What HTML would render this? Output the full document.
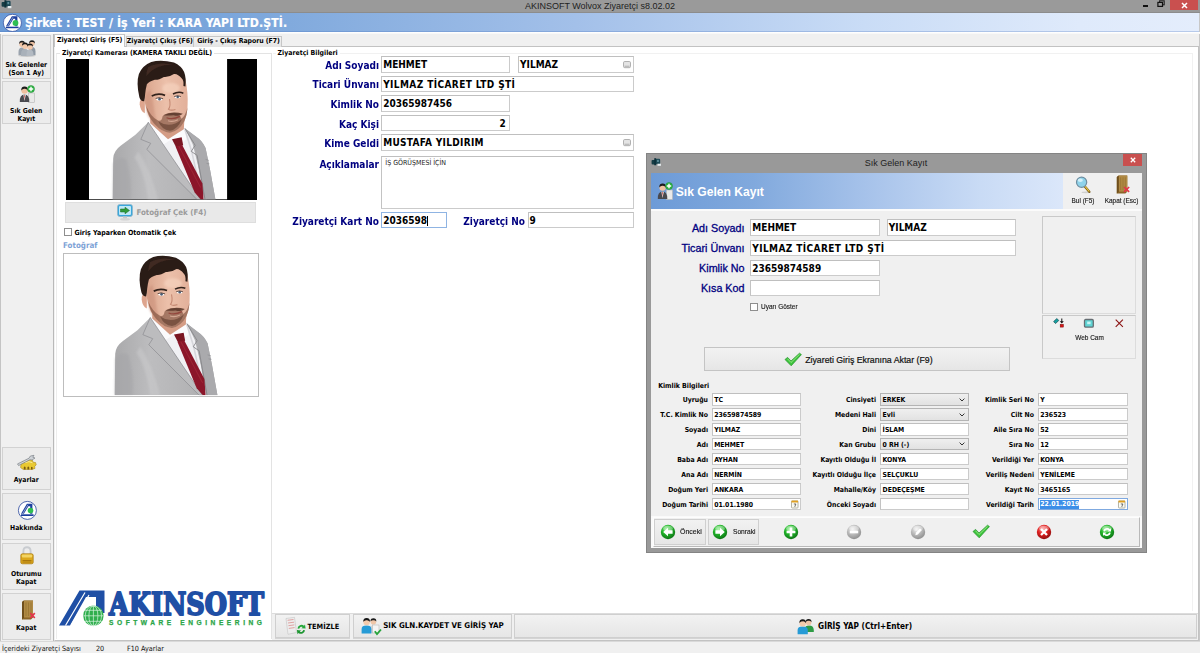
<!DOCTYPE html>
<html lang="tr">
<head>
<meta charset="utf-8">
<title>AKINSOFT Wolvox Ziyaretçi s8.02.02</title>
<style>
*{box-sizing:border-box;margin:0;padding:0}
html,body{width:1200px;height:653px;overflow:hidden;background:#f0f0f0}
body{position:relative;font-family:"DejaVu Sans Condensed","Liberation Sans",sans-serif;font-weight:bold;font-size:6.9px;color:#000;line-height:1}
.a{position:absolute;white-space:nowrap}
.ar{font-family:"Liberation Sans",sans-serif;font-weight:normal}
.tb{font-family:"DejaVu Sans Condensed","Liberation Sans",sans-serif;font-weight:bold}
.tn{font-family:"DejaVu Sans Condensed","Liberation Sans",sans-serif;font-weight:normal}
.inp{position:absolute;background:#fff;border:1px solid #cbcbcb;border-top-color:#bfbfbf;border-left-color:#c3c3c3;white-space:nowrap;overflow:hidden}
.big{font-size:10px;padding-left:.9px}
.L{position:absolute;white-space:nowrap;color:#000080;font-size:11px;text-align:right;transform:scaleX(.91);transform-origin:right center}
.sb{position:absolute;left:2px;width:48.5px;background:#ececec;border:1px solid #d2d2d2;text-align:center;font-size:6.8px;line-height:8px}
.btn{position:absolute;background:linear-gradient(#f2f2f2,#e6e6e6);border:1px solid #cfcfcf}
.sm{font-size:6.85px;padding-left:1.3px}
.sl{position:absolute;white-space:nowrap;font-size:6.85px;text-align:right}
.ms{font-family:"Liberation Sans",sans-serif;font-weight:normal;font-size:7.5px;line-height:8px;color:#1c1c1c;-webkit-text-stroke:.15px #1c1c1c;transform:scaleX(.86)}
svg{position:absolute;overflow:visible}
</style>
</head>
<body>
<svg width="0" height="0" style="left:0;top:0">
<defs>
<filter id="bl" x="-5%" y="-5%" width="110%" height="110%"><feGaussianBlur stdDeviation="0.5"/></filter>
<filter id="bl2" x="-20%" y="-20%" width="140%" height="140%"><feGaussianBlur stdDeviation="1.2"/></filter>
<linearGradient id="suit" x1="0" y1="0" x2="1" y2="0"><stop offset="0" stop-color="#a9a9ab"/><stop offset=".35" stop-color="#bdbdbf"/><stop offset=".75" stop-color="#b3b3b5"/><stop offset="1" stop-color="#a2a2a4"/></linearGradient>
<linearGradient id="skin" x1="0" y1="0" x2="1" y2="0"><stop offset="0" stop-color="#d9a48c"/><stop offset=".5" stop-color="#ecc0aa"/><stop offset="1" stop-color="#e2b09a"/></linearGradient>
<symbol id="man" viewBox="0 0 140 140">
<rect width="140" height="140" fill="#fff"/>
<g filter="url(#bl)">
<!-- suit body -->
<path d="M60 63 L47 75.5 L32 86.5 Q25 91.5 24.5 99 L24 140 L128 140 L122.5 110 L118 88.5 Q114.5 81 108.5 77.5 L97 69 Z" fill="url(#suit)"/>
<!-- sleeve shading -->
<path d="M24.3 104 Q30 96 38 100 Q44 120 42 140 L24 140Z" fill="#a5a5a8" opacity=".55" filter="url(#bl2)"/>
<path d="M50 92 Q62 110 70 140 L60 140 Q56 112 46 98Z" fill="#c9c9cb" opacity=".6" filter="url(#bl2)"/>
<!-- shirt -->
<path d="M61 62 L60 66 L84 98 L111 140 L119 140 L105 85 L97 69 Z" fill="#f1f1f4"/>
<path d="M61 60 L97.5 67.5 L98.5 80 L91 86 L84.5 79.5 L71 88 L60 66Z" fill="#fbfbfd"/>
<path d="M97 70 L104 92 L112 128" stroke="#d7d7dc" stroke-width="1.6" fill="none"/>
<!-- lapels -->
<path d="M60 63 L52.5 80 L62.5 84 L58.5 90 L109.5 140 L113 140 L84 98 Z" fill="#bcbcbe" stroke="#8c8c90" stroke-width=".7"/>
<path d="M97 69 L106.5 84 L116.5 140 L128 140 L122.5 110 L118 88.5 Q113 80 108.5 77.5Z" fill="#aaaaad"/>
<path d="M97 69 L107.5 86 L103.5 92 L109.5 96 L117.5 140" fill="none" stroke="#86868a" stroke-width=".9"/>
<path d="M119 104 l3 .5 M118 100 l3.5 1" stroke="#8a8a8e" stroke-width=".6"/>
<!-- tie -->
<path d="M84 79.8 L93.8 78 L95.3 86 L88.2 87.8 Z" fill="#7a1323"/>
<path d="M87.6 87.2 L94.3 85.6 L114.8 124 L116 140 L113.2 140 L107 133 Z" fill="#8b1729"/>
<path d="M91 87 L113 128" stroke="#a32a3b" stroke-width="1" opacity=".7"/>
<!-- neck -->
<path d="M62 50 L62 64 L80 80 L96 70 L97 52 Z" fill="#d49c85"/>
<!-- ear -->
<path d="M56.5 40.5 Q51 38.5 51.3 45 Q52 52 56.5 54 Z" fill="#dea58e"/>
<!-- face -->
<path d="M56.5 27 Q55 40 57.2 46 Q59 57 66 64.5 Q74 73 82 73.2 Q91 72 96.5 62 Q99.6 55 99.8 46 Q100.5 34 97.5 20 Q84 4 62 15 Z" fill="url(#skin)"/>
<path d="M57 36 Q56.5 48 60 57 Q64 64 70 68 Q66 56 65 44 Q64 36 62 30Z" fill="#c98e78" opacity=".55" filter="url(#bl2)"/>
<ellipse cx="83" cy="29" rx="9" ry="5" fill="#f6d3bf" opacity=".7" filter="url(#bl2)"/>
<!-- beard -->
<path d="M58 47 Q59.5 57 66 64.5 Q74 73.2 82 73.4 Q91 72 96.5 62 Q99.4 56 99.8 48 Q97.5 57 93.5 59.5 Q92 54 85.5 53.5 Q77.5 53 74.5 57 Q73.5 63 69.5 61 Q62.5 57.5 58 47Z" fill="#7a4e3c" opacity=".62"/>
<path d="M70 62 Q82 70 94 60 Q90 70 82 71.5 Q74 71 70 62Z" fill="#5e3b2d" opacity=".6"/>
<path d="M75.5 56 Q84 51.5 95 54.5 Q92 57.5 85.5 56 Q80 56.5 75.5 56Z" fill="#5d3a2c" opacity=".9"/>
<path d="M78.5 58.5 Q85 60.8 92 57.2" stroke="#93463c" stroke-width="1.3" fill="none"/>
<path d="M80 61.5 Q85 63 90 60.5" stroke="#e0b29d" stroke-width="1.1" fill="none" opacity=".8"/>
<!-- eyes / brows / nose -->
<path d="M63.5 36.8 Q70 33.6 77 36.2" stroke="#33231d" stroke-width="1.7" fill="none"/>
<path d="M85 34.8 Q90.5 32 95.5 34" stroke="#33231d" stroke-width="1.6" fill="none"/>
<ellipse cx="71.2" cy="40" rx="3.2" ry="1.4" fill="#fff"/><circle cx="71.4" cy="40" r="1.3" fill="#4b5f78"/>
<ellipse cx="89.6" cy="37.9" rx="3" ry="1.3" fill="#fff"/><circle cx="89.8" cy="37.9" r="1.25" fill="#4b5f78"/>
<path d="M67.5 39.3 Q71 37.6 75 39.6 M86.3 37.4 Q89.6 35.8 93 37.4" stroke="#3b2a24" stroke-width=".8" fill="none"/>
<path d="M81.5 40 Q83 47 80.5 50 Q83 51.8 87.5 50.2" stroke="#c58a74" stroke-width="1.1" fill="none"/>
<!-- hair -->
<path d="M55.8 42 Q52.4 42.5 51 38 Q47.6 24 50.5 15 Q54 6.5 63 3 Q73 .2 86 3.6 Q93.5 7 96.3 13 Q98.6 19 97.6 27.5 L95.6 27 Q96.2 21.5 94 19.5 Q89.5 14.2 86 15 Q81 18.4 75.8 17.9 Q70 21.2 66.6 20.7 Q60.5 22.5 58.6 25.2 Q57.3 30 56.9 34.3 Q56.6 39 55.8 42 Z" fill="#2b1c17"/>
<path d="M60 8 Q72 2 86 6 Q78 5 70 8 Q63 11 58 17 Q58 12 60 8Z" fill="#4a3026" opacity=".7"/>
</g>
</symbol>
</defs>
</svg>
<svg width="0" height="0" style="left:0;top:0"><defs>
<radialGradient id="gball" cx=".4" cy=".3" r=".75"><stop offset="0" stop-color="#8df08a"/><stop offset=".45" stop-color="#22b52a"/><stop offset="1" stop-color="#0b6f14"/></radialGradient>
<radialGradient id="rball" cx=".4" cy=".3" r=".75"><stop offset="0" stop-color="#ff9a9a"/><stop offset=".45" stop-color="#e02222"/><stop offset="1" stop-color="#8a0c0c"/></radialGradient>
<radialGradient id="xball" cx=".4" cy=".3" r=".75"><stop offset="0" stop-color="#f1f1f1"/><stop offset=".5" stop-color="#b9b9b9"/><stop offset="1" stop-color="#8a8a8a"/></radialGradient>
</defs></svg>
<!-- ===== main window title bar ===== -->
<div class="a" style="left:0;top:0;width:1200px;height:12.6px;background:#9a9a9a;border-bottom:1px solid #8c8c8c"></div>
<svg style="left:1px;top:0" width="11" height="9" viewBox="0 0 11 9" filter="url(#bl)"><rect x=".6" y="2" width="4.2" height="4.8" rx="1" fill="#183c45"/><rect x="4.6" y=".8" width="5" height="5.8" rx="1.2" fill="#1f4a56"/><rect x="3.4" y=".2" width="2" height="7.4" fill="#10323b"/><rect x="6.4" y="2" width="1.8" height="2.2" fill="#5f8f9c"/><rect x="6.8" y="6" width="3.6" height="2.2" fill="#e6ecee"/></svg>
<div class="a ar" style="left:450px;top:0.5px;width:300px;text-align:center;font-size:9px;color:#1e1e1e;line-height:10px">AKINSOFT Wolvox Ziyaretçi s8.02.02</div>
<div class="a" style="left:1142.5px;top:5px;width:5.5px;height:1.6px;background:#111"></div>
<svg style="left:1157px;top:0" width="9" height="8" viewBox="0 0 9 8"><rect x="2.6" y=".8" width="4.6" height="4" fill="none" stroke="#222" stroke-width="1.1"/><rect x=".9" y="2.4" width="4.6" height="4" fill="#9a9a9a" stroke="#111" stroke-width="1.2"/></svg>
<div class="a" style="left:1169.8px;top:0;width:28.2px;height:9.8px;background:#c9504f"></div>
<svg style="left:1181px;top:1.5px" width="7" height="7" viewBox="0 0 7 7"><path d="M1 1L6 6M6 1L1 6" stroke="#fff" stroke-width="1.5"/></svg>

<!-- ===== blue header ===== -->
<div class="a" style="left:0;top:31.6px;width:1200px;height:2.6px;background:linear-gradient(#fff,#fdfdfd 60%,#f0f0f0);z-index:1"></div>
<div class="a" style="left:0;top:12.6px;width:1200px;height:19px;box-shadow:inset 0 -1px 0 rgba(70,110,185,.28);background:linear-gradient(to right,#6a9ad6 0%,#7ea8dc 22%,#a3c0e9 48%,#c9dcf6 72%,#dfeafb 90%,#e4edfc 100%)"></div>
<div class="a" style="left:0;top:32.2px;width:1.4px;height:609px;background:#c4c4c4"></div>
<div class="a" style="left:1199px;top:12.6px;width:1px;height:641px;background:#c8c8c8"></div>
<svg style="left:3.2px;top:13.8px" width="18.8" height="17.8" viewBox="0 0 18.8 17.8"><ellipse cx="9.4" cy="8.9" rx="9.1" ry="8.6" fill="#fff" stroke="#27459a" stroke-width=".7"/><path d="M3 12.3L8.9 2.3H14.4V12.3H12.2V4.7H10.4L5.9 12.3Z" fill="#1c3f9e"/><path d="M4.6 12.3L10 3.2" stroke="#fff" stroke-width=".5"/><circle cx="12.5" cy="8.9" r="2.9" fill="#2fbf52"/><rect x="3" y="12.7" width="12.6" height="1.5" fill="#1c3f9e"/></svg>
<div class="a tb" style="left:25px;top:16px;font-size:12.15px;color:#fff;line-height:14px;letter-spacing:.1px;-webkit-text-stroke:.2px #fff">Şirket : TEST / İş Yeri : KARA YAPI LTD.ŞTİ.</div>

<!-- ===== sidebar ===== -->
<div class="a" style="left:1.4px;top:32.2px;width:52.4px;height:608.5px;background:#f0f0f0;border-right:1.8px solid #b9b9b9"></div>
<div class="sb" style="top:34.5px;height:44.5px"><div class="a" style="left:0;right:0;top:25.5px">Sık Gelenler<br>(Son 1 Ay)</div></div>
<div class="sb" style="top:80.5px;height:43px"><div class="a" style="left:0;right:0;top:25px">Sık Gelen<br>Kayıt</div></div>
<div class="sb" style="top:447px;height:42.5px"><div class="a" style="left:0;right:0;top:28px">Ayarlar</div></div>
<div class="sb" style="top:493px;height:46.5px"><div class="a" style="left:0;right:0;top:30px">Hakkında</div></div>
<div class="sb" style="top:543px;height:46.5px"><div class="a" style="left:0;right:0;top:26px">Oturumu<br>Kapat</div></div>
<div class="sb" style="top:593px;height:46.5px"><div class="a" style="left:0;right:0;top:30px">Kapat</div></div>

<!-- ===== tabs + page ===== -->
<div class="a" style="left:54px;top:46.2px;width:1145px;height:594.5px;background:#fff;border:1px solid #c2c2c2;border-left-color:#f2f2f2"></div>
<div class="a" style="left:125.5px;top:35.5px;width:68.5px;height:11px;background:linear-gradient(#f3f3f3,#e4e4e4);border:1px solid #c6c6c6;border-bottom:none"></div>
<div class="a" style="left:194px;top:35.5px;width:88px;height:11px;background:linear-gradient(#f3f3f3,#e4e4e4);border:1px solid #c6c6c6;border-bottom:none;border-left:none"></div>
<div class="a" style="left:53.8px;top:33.6px;width:71.7px;height:13.8px;background:#fff;border:1px solid #c6c6c6;border-bottom:none"></div>
<div class="a" style="left:56.9px;top:37.3px">Ziyaretçi Giriş (F5)</div>
<div class="a" style="left:126.8px;top:38.3px">Ziyaretçi Çıkış (F6)</div>
<div class="a" style="left:197.2px;top:38.3px;letter-spacing:-.02px">Giriş - Çıkış Raporu (F7)</div>

<!-- group boxes -->
<div class="a" style="left:56.3px;top:52.8px;width:215.5px;height:586px;border:1px solid #e3e3e3;border-left-color:#ededed;border-bottom:none"></div>
<div class="a" style="left:273px;top:52.8px;width:919.5px;height:558px;border:1px solid #f1f1f1;border-left:none;border-bottom:none"></div>
<div class="a" style="left:60px;top:50.2px;background:#fff;padding:0 2px">Ziyaretçi Kamerası (KAMERA TAKILI DEĞİL)</div>
<div class="a" style="left:275.6px;top:50.2px;background:#fff;padding:0 2px">Ziyaretçi Bilgileri</div>

<!-- camera -->
<div class="a" style="left:66.4px;top:59.1px;width:190.8px;height:140.6px;background:#000"></div>
<svg style="left:88.7px;top:59.1px" width="138.3" height="140.6" viewBox="0 0 140 140" preserveAspectRatio="none"><use href="#man"/></svg>
<div class="a" style="left:65px;top:201.5px;width:190.8px;height:21px;background:#e9e9e9;border:1px solid #dedede"></div>
<div class="a" style="left:136.4px;top:208.6px;font-size:7.9px;color:#9b9b9b">Fotoğraf Çek (F4)</div>
<svg style="left:117px;top:204px" width="16" height="17" viewBox="0 0 16 17"><rect x=".5" y=".5" width="15" height="12" rx="2.2" fill="#3aa7dc" stroke="#8fb6c9" stroke-width=".8"/><rect x="2" y="2" width="12" height="9" rx="1" fill="#bfe8f7"/><path d="M3.5 5H8V3.2L12.5 6.5L8 9.8V8H3.5Z" fill="#2f9a3a" stroke="#176b22" stroke-width=".5"/><rect x="6" y="12.5" width="4" height="2" fill="#c9c9c9"/><ellipse cx="8" cy="15.3" rx="5" ry="1.2" fill="#d4d4d4"/></svg>
<div class="a" style="left:64.4px;top:228px;width:7.8px;height:7.8px;background:#fff;border:1px solid #8e8e8e"></div>
<div class="a" style="left:74.5px;top:229.5px;font-size:7px">Giriş Yaparken Otomatik Çek</div>
<div class="a" style="left:63px;top:242.4px;color:#7ea3d6;font-size:7.95px">Fotoğraf</div>
<div class="a" style="left:63.3px;top:253.2px;width:196px;height:144.3px;background:#fff;border:1px solid #bdbdbd"></div>
<svg style="left:91px;top:254.4px" width="138.3" height="141.2" viewBox="0 0 140 140" preserveAspectRatio="none"><use href="#man"/></svg>

<!-- AKINSOFT logo -->
<svg style="left:58px;top:588px" width="212" height="42" viewBox="0 0 212 42">
<path d="M1 37.5 L21.5 2.5 H46.5 V25 H38 V9 H28 L12 37.5 Z" fill="#1f4fa5"/>
<path d="M7.5 37.5 L27 4.5 M13 37.5 L31 7" stroke="#fff" stroke-width="1.2" fill="none"/>
<circle cx="35.4" cy="27.8" r="10.2" fill="#2fae4d"/>
<g stroke="#d9f3df" stroke-width=".7" fill="none"><ellipse cx="35.4" cy="27.8" rx="4.5" ry="10"/><ellipse cx="35.4" cy="27.8" rx="8.2" ry="10"/><path d="M35.4 17.8V37.8M25.4 27.8H45.4M27 22.3H43.8M27 33.3H43.8"/></g>
<text x="51" y="27.3" font-family="DejaVu Serif Condensed,DejaVu Serif,Liberation Serif,serif" font-weight="bold" font-size="31" fill="#1f4fa5" stroke="#1f4fa5" stroke-width="1.9" stroke-linejoin="round" textLength="155" lengthAdjust="spacingAndGlyphs">AKINSOFT</text>
<text x="51" y="37.2" font-family="Liberation Sans,sans-serif" font-weight="bold" font-size="6.6" fill="#2aa548" stroke="#2aa548" stroke-width=".25" textLength="153" lengthAdjust="spacing">SOFTWARE ENGINEERING</text>
</svg>

<!-- form labels -->
<div class="L" style="left:273px;width:106px;top:59.8px">Adı Soyadı</div>
<div class="L" style="left:273px;width:106px;top:79.4px">Ticari Ünvanı</div>
<div class="L" style="left:273px;width:106px;top:99.0px">Kimlik No</div>
<div class="L" style="left:273px;width:106px;top:118.6px">Kaç Kişi</div>
<div class="L" style="left:273px;width:106px;top:138.2px">Kime Geldi</div>
<div class="L" style="left:273px;width:106px;top:158.8px">Açıklamalar</div>
<div class="L" style="left:273px;width:106px;top:215.8px">Ziyaretçi Kart No</div>
<div class="L" style="left:419px;width:106px;top:215.8px">Ziyaretçi No</div>
<!-- form inputs -->
<div class="inp big" style="left:381.3px;top:56px;width:129px;height:16.6px;line-height:16px">MEHMET</div>
<div class="inp big" style="left:518.2px;top:56px;width:115.4px;height:16.6px;line-height:16px">YILMAZ</div>
<div class="inp big" style="left:381.3px;top:75.6px;width:252.3px;height:16.6px;line-height:16px;letter-spacing:.4px">YILMAZ TİCARET LTD ŞTİ</div>
<div class="inp big" style="left:381.3px;top:95.2px;width:129px;height:16.6px;line-height:16px">20365987456</div>
<div class="inp big" style="left:381.3px;top:114.8px;width:129px;height:16.6px;line-height:16px;text-align:right;padding-right:3.5px">2</div>
<div class="inp big" style="left:381.3px;top:134.4px;width:252.3px;height:16.6px;line-height:16px;letter-spacing:.3px">MUSTAFA YILDIRIM</div>
<div class="inp" style="left:381.3px;top:156.4px;width:252.3px;height:52.2px"><div class="a tn" style="left:3px;top:3px;font-size:7px;color:#222">İŞ GÖRÜŞMESİ İÇİN</div></div>
<div class="inp big" style="left:381.3px;top:212px;width:65.5px;height:16.4px;line-height:15.8px;border-color:#8fb4e3">2036598<span style="display:inline-block;width:1px;height:10px;background:#000;vertical-align:-1.5px"></span></div>
<div class="inp big" style="left:527.7px;top:212px;width:105.9px;height:16.4px;line-height:15.8px">9</div>
<svg style="left:623px;top:60.5px" width="8" height="8" viewBox="0 0 8 8"><rect x=".5" y=".5" width="7" height="6.2" rx="1.3" fill="#e4e4e4" stroke="#a9a9a9" stroke-width=".9"/><rect x="1.5" y="4.6" width="5" height="1.5" fill="#bdbdbd"/></svg>
<svg style="left:623px;top:138.9px" width="8" height="8" viewBox="0 0 8 8"><rect x=".5" y=".5" width="7" height="6.2" rx="1.3" fill="#e4e4e4" stroke="#a9a9a9" stroke-width=".9"/><rect x="1.5" y="4.6" width="5" height="1.5" fill="#bdbdbd"/></svg>

<!-- bottom buttons -->
<div class="a" style="left:272px;top:613px;width:926px;height:27px;background:#f0f0f0;border-top:1px solid #dcdcdc"></div>
<div class="btn" style="left:274.6px;top:614px;width:75.6px;height:23.6px;box-shadow:0 1px 0 #d4d4d4"></div>
<div class="btn" style="left:352.8px;top:614px;width:159px;height:23.6px;box-shadow:0 1px 0 #d4d4d4"></div>
<div class="btn" style="left:514px;top:614px;width:682.5px;height:23.6px;box-shadow:0 1px 0 #d4d4d4"></div>
<div class="a" style="left:307.6px;top:622.5px;font-size:7.35px">TEMİZLE</div>
<div class="a" style="left:383.2px;top:622.2px;font-size:7.92px">SIK GLN.KAYDET VE GİRİŞ YAP</div>
<div class="a" style="left:818.1px;top:622.3px;font-size:8.23px">GİRİŞ YAP (Ctrl+Enter)</div>

<!-- status bar -->
<div class="a" style="left:0;top:640.7px;width:1200px;height:12.3px;background:#f0f0f0;border-top:1px solid #d9d9d9"></div>
<div class="a tn" style="left:2px;top:644.5px;font-size:7.2px;color:#111">İçerideki Ziyaretçi Sayısı</div>
<div class="a tn" style="left:96px;top:644.5px;font-size:7.2px;color:#111">20</div>
<div class="a tn" style="left:127px;top:644.5px;font-size:7.2px;color:#111">F10 Ayarlar</div>
<!-- ===== dialog ===== -->
<div class="a" style="left:645.7px;top:153px;width:501.2px;height:399.8px;background:#999;border:1px solid #848484"></div>
<div class="a" style="left:650.8px;top:172.8px;width:491.4px;height:375.3px;background:#f0f0f0"></div>
<svg style="left:651.3px;top:157.5px" width="10.5" height="8.6" viewBox="0 0 11 9" filter="url(#bl)"><rect x=".6" y="2" width="4.2" height="4.8" rx="1" fill="#183c45"/><rect x="4.6" y=".8" width="5" height="5.8" rx="1.2" fill="#1f4a56"/><rect x="3.4" y=".2" width="2" height="7.4" fill="#10323b"/><rect x="6.4" y="2" width="1.8" height="2.2" fill="#5f8f9c"/><rect x="6.8" y="6" width="3.6" height="2.2" fill="#e6ecee"/></svg>
<div class="a ar" style="left:796px;top:158px;width:200px;text-align:center;font-size:9px;color:#222;line-height:10px">Sık Gelen Kayıt</div>
<div class="a" style="left:1123.1px;top:153.6px;width:19.4px;height:12.4px;background:#c9504f"></div>
<svg style="left:1129.8px;top:156.8px" width="6" height="6" viewBox="0 0 6 6"><path d="M.8 .8L5.2 5.2M5.2 .8L.8 5.2" stroke="#fff" stroke-width="1.3"/></svg>
<div class="a" style="left:650.8px;top:172.8px;width:412.4px;height:36px;background:linear-gradient(to right,#6d9bd7 0%,#81a9dd 25%,#a6c2ea 52%,#c9dbf5 80%,#dbe7fa 100%)"></div>
<div class="a" style="left:650.8px;top:208.8px;width:491.4px;height:1.9px;background:#fbfbfb"></div>
<div class="a ar" style="left:675.8px;top:185px;font-size:12.1px;font-weight:bold;color:#fff;line-height:14px">Sık Gelen Kayıt</div>
<div class="a ms" style="left:1062.5px;top:196.5px;width:40px;text-align:center">Bul (F5)</div>
<div class="a ms" style="left:1095.8px;top:196.5px;width:51px;text-align:center">Kapat (Esc)</div>
<div class="a ar" style="left:640px;width:104.5px;text-align:right;top:222.7px;font-size:10.75px;color:#000080;line-height:11px;-webkit-text-stroke:.3px #000080">Adı Soyadı</div>
<div class="a ar" style="left:640px;width:104.5px;text-align:right;top:242.8px;font-size:10.75px;color:#000080;line-height:11px;-webkit-text-stroke:.3px #000080">Ticari Ünvanı</div>
<div class="a ar" style="left:640px;width:104.5px;text-align:right;top:262.9px;font-size:10.75px;color:#000080;line-height:11px;-webkit-text-stroke:.3px #000080">Kimlik No</div>
<div class="a ar" style="left:640px;width:104.5px;text-align:right;top:283.0px;font-size:10.75px;color:#000080;line-height:11px;-webkit-text-stroke:.3px #000080">Kısa Kod</div>
<div class="inp big" style="left:750.4px;top:219.4px;width:129.5px;height:16.6px;line-height:16px;">MEHMET</div>
<div class="inp big" style="left:886.9px;top:219.4px;width:129.1px;height:16.6px;line-height:16px;">YILMAZ</div>
<div class="inp big" style="left:750.4px;top:239.5px;width:265.6px;height:16.6px;line-height:16px;letter-spacing:.4px">YILMAZ TİCARET LTD ŞTİ</div>
<div class="inp big" style="left:750.4px;top:259.6px;width:129.5px;height:16.6px;line-height:16px;">23659874589</div>
<div class="inp big" style="left:750.4px;top:279.7px;width:129.5px;height:16.6px;line-height:16px;"></div>
<div class="a" style="left:750.4px;top:302.8px;width:7.8px;height:7.8px;background:#fff;border:1px solid #8e8e8e"></div>
<div class="a ms" style="left:760.9px;top:302.8px;transform-origin:left center">Uyarı Göster</div>
<div class="a" style="left:1041.6px;top:216.4px;width:94.2px;height:97.3px;background:#f0f0f0;border:1px solid #c9c9c9;border-right-color:#dcdcdc;border-bottom-color:#dcdcdc"></div>
<div class="a" style="left:1041.6px;top:315px;width:94.2px;height:44.4px;background:#f0f0f0;border:1px solid #c9c9c9;border-right-color:#dcdcdc;border-bottom-color:#dcdcdc"></div>
<div class="a ms" style="left:1058.7px;top:333.8px;width:61px;text-align:center">Web Cam</div>
<div class="btn" style="left:704.2px;top:347.2px;width:306.2px;height:23.9px;border-color:#c4c4c4"></div>
<div class="a ar" style="left:805.2px;top:355.3px;font-size:8.75px;color:#111;line-height:10px;-webkit-text-stroke:.2px #111">Ziyareti Giriş Ekranına Aktar (F9)</div>
<div class="a" style="left:658.2px;top:383.3px">Kimlik Bilgileri</div>
<div class="sl" style="left:608px;width:100px;top:396.9px">Uyruğu</div>
<div class="inp sm" style="left:711.9px;top:393.4px;width:89.1px;height:12.3px;line-height:13.100000000000001px">TC</div>
<div class="sl" style="left:608px;width:100px;top:411.8px">T.C. Kimlik No</div>
<div class="inp sm" style="left:711.9px;top:408.3px;width:89.1px;height:12.3px;line-height:13.100000000000001px">23659874589</div>
<div class="sl" style="left:608px;width:100px;top:426.8px">Soyadı</div>
<div class="inp sm" style="left:711.9px;top:423.3px;width:89.1px;height:12.3px;line-height:13.100000000000001px">YILMAZ</div>
<div class="sl" style="left:608px;width:100px;top:441.8px">Adı</div>
<div class="inp sm" style="left:711.9px;top:438.2px;width:89.1px;height:12.3px;line-height:13.100000000000001px">MEHMET</div>
<div class="sl" style="left:608px;width:100px;top:456.7px">Baba Adı</div>
<div class="inp sm" style="left:711.9px;top:453.2px;width:89.1px;height:12.3px;line-height:13.100000000000001px">AYHAN</div>
<div class="sl" style="left:608px;width:100px;top:471.6px">Ana Adı</div>
<div class="inp sm" style="left:711.9px;top:468.1px;width:89.1px;height:12.3px;line-height:13.100000000000001px">NERMİN</div>
<div class="sl" style="left:608px;width:100px;top:486.6px">Doğum Yeri</div>
<div class="inp sm" style="left:711.9px;top:483.1px;width:89.1px;height:12.3px;line-height:13.100000000000001px">ANKARA</div>
<div class="sl" style="left:608px;width:100px;top:501.5px">Doğum Tarihi</div>
<div class="inp sm" style="left:711.9px;top:498.0px;width:89.1px;height:12.3px;line-height:13.100000000000001px">01.01.1980<svg style="right:1.5px;top:1.2px" width="7.5" height="8.5" viewBox="0 0 8 9"><rect x=".5" y="1" width="7" height="7.5" rx=".8" fill="#fbfbf3" stroke="#9a9a8a" stroke-width=".8"/><rect x=".5" y=".6" width="7" height="2" fill="#e0a020"/><path d="M3 4.2H5.2L4 7.3" stroke="#444" stroke-width=".8" fill="none"/></svg></div>
<div class="sl" style="left:776px;width:100px;top:396.9px">Cinsiyeti</div>
<div class="inp sm" style="left:880.3px;top:393.4px;width:88.5px;height:12.3px;line-height:13.100000000000001px;background:linear-gradient(#efefef,#e2e2e2);border-color:#b4b4b4">ERKEK<svg style="right:2.5px;top:3.3px" width="6" height="4" viewBox="0 0 6 4"><path d="M.6 .6L3 3L5.4 .6" stroke="#333" stroke-width="1" fill="none"/></svg></div>
<div class="sl" style="left:776px;width:100px;top:411.8px">Medeni Hali</div>
<div class="inp sm" style="left:880.3px;top:408.3px;width:88.5px;height:12.3px;line-height:13.100000000000001px;background:linear-gradient(#efefef,#e2e2e2);border-color:#b4b4b4">Evli<svg style="right:2.5px;top:3.3px" width="6" height="4" viewBox="0 0 6 4"><path d="M.6 .6L3 3L5.4 .6" stroke="#333" stroke-width="1" fill="none"/></svg></div>
<div class="sl" style="left:776px;width:100px;top:426.8px">Dini</div>
<div class="inp sm" style="left:880.3px;top:423.3px;width:88.5px;height:12.3px;line-height:13.100000000000001px">İSLAM</div>
<div class="sl" style="left:776px;width:100px;top:441.8px">Kan Grubu</div>
<div class="inp sm" style="left:880.3px;top:438.2px;width:88.5px;height:12.3px;line-height:13.100000000000001px;background:linear-gradient(#efefef,#e2e2e2);border-color:#b4b4b4">0 RH (-)<svg style="right:2.5px;top:3.3px" width="6" height="4" viewBox="0 0 6 4"><path d="M.6 .6L3 3L5.4 .6" stroke="#333" stroke-width="1" fill="none"/></svg></div>
<div class="sl" style="left:776px;width:100px;top:456.7px">Kayıtlı Olduğu İl</div>
<div class="inp sm" style="left:880.3px;top:453.2px;width:88.5px;height:12.3px;line-height:13.100000000000001px">KONYA</div>
<div class="sl" style="left:776px;width:100px;top:471.6px">Kayıtlı Olduğu İlçe</div>
<div class="inp sm" style="left:880.3px;top:468.1px;width:88.5px;height:12.3px;line-height:13.100000000000001px">SELÇUKLU</div>
<div class="sl" style="left:776px;width:100px;top:486.6px">Mahalle/Köy</div>
<div class="inp sm" style="left:880.3px;top:483.1px;width:88.5px;height:12.3px;line-height:13.100000000000001px">DEDEÇEŞME</div>
<div class="sl" style="left:776px;width:100px;top:501.5px">Önceki Soyadı</div>
<div class="inp sm" style="left:880.3px;top:498.0px;width:88.5px;height:12.3px;line-height:13.100000000000001px"></div>
<div class="sl" style="left:934px;width:100px;top:396.9px">Kimlik Seri No</div>
<div class="inp sm" style="left:1038px;top:393.4px;width:89.5px;height:12.3px;line-height:13.100000000000001px">Y</div>
<div class="sl" style="left:934px;width:100px;top:411.8px">Cilt No</div>
<div class="inp sm" style="left:1038px;top:408.3px;width:89.5px;height:12.3px;line-height:13.100000000000001px">236523</div>
<div class="sl" style="left:934px;width:100px;top:426.8px">Aile Sıra No</div>
<div class="inp sm" style="left:1038px;top:423.3px;width:89.5px;height:12.3px;line-height:13.100000000000001px">52</div>
<div class="sl" style="left:934px;width:100px;top:441.8px">Sıra No</div>
<div class="inp sm" style="left:1038px;top:438.2px;width:89.5px;height:12.3px;line-height:13.100000000000001px">12</div>
<div class="sl" style="left:934px;width:100px;top:456.7px">Verildiği Yer</div>
<div class="inp sm" style="left:1038px;top:453.2px;width:89.5px;height:12.3px;line-height:13.100000000000001px">KONYA</div>
<div class="sl" style="left:934px;width:100px;top:471.6px">Veriliş Nedeni</div>
<div class="inp sm" style="left:1038px;top:468.1px;width:89.5px;height:12.3px;line-height:13.100000000000001px">YENİLEME</div>
<div class="sl" style="left:934px;width:100px;top:486.6px">Kayıt No</div>
<div class="inp sm" style="left:1038px;top:483.1px;width:89.5px;height:12.3px;line-height:13.100000000000001px">3465165</div>
<div class="sl" style="left:934px;width:100px;top:501.5px">Verildiği Tarih</div>
<div class="inp sm" style="left:1038px;top:498.0px;width:89.5px;height:12.3px;line-height:13.100000000000001px;border-color:#7fa9e0"><span style="background:#3c8ee8;color:#fff;display:inline-block;height:8.9px;line-height:8.9px;vertical-align:top;margin-top:.8px">22.01.2019</span><svg style="right:1.5px;top:1.2px" width="7.5" height="8.5" viewBox="0 0 8 9"><rect x=".5" y="1" width="7" height="7.5" rx=".8" fill="#fbfbf3" stroke="#9a9a8a" stroke-width=".8"/><rect x=".5" y=".6" width="7" height="2" fill="#e0a020"/><path d="M3 4.2H5.2L4 7.3" stroke="#444" stroke-width=".8" fill="none"/></svg></div>
<div class="a" style="left:650.8px;top:516.4px;width:491.4px;height:31.7px;background:#fafafa"></div>
<div class="a" style="left:652.6px;top:516.6px;width:487.6px;height:30px;background:#f0f0f0;border:1px solid #fdfdfd;border-right-color:#b9b9b9;border-bottom-color:#b9b9b9"></div>
<div class="btn" style="left:653.8px;top:519px;width:51.8px;height:26px"></div>
<div class="btn" style="left:707.5px;top:519px;width:51.2px;height:26px"></div>
<div class="a ms" style="left:679.8px;top:528.2px;transform-origin:left center;transform:scaleX(.93)">Önceki</div>
<div class="a ms" style="left:732.7px;top:528.2px;transform-origin:left center;transform:scaleX(.885)">Sonraki</div>
<!-- ===== icons ===== -->
<!-- sidebar: group -->
<svg style="left:17px;top:39px" width="20" height="18" viewBox="0 0 20 18" filter="url(#bl)">
<ellipse cx="10" cy="16.6" rx="9" ry="1.3" fill="#c9c9c9"/>
<path d="M1.5 13Q1.5 8.5 5 8.5Q8.5 8.5 8.5 13V16H1.5Z" fill="#9aa3ad"/><circle cx="5" cy="5.2" r="2.7" fill="#efc3a4"/><path d="M2.2 5Q2 1.8 5 1.8Q8 1.8 7.8 5Q6.5 3.4 5 3.6Q3.4 3.4 2.2 5Z" fill="#1b1b1b"/>
<path d="M11.5 12.5Q11.5 8 15 8Q18.5 8 18.5 12.5V16H11.5Z" fill="#8f99a5"/><circle cx="15" cy="4.6" r="2.7" fill="#efc3a4"/><path d="M12.2 4.4Q12 1.2 15 1.2Q18 1.2 17.8 4.4Q16.5 2.8 15 3Q13.4 2.8 12.2 4.4Z" fill="#1b1b1b"/>
<path d="M4 15Q4 10 8 10Q12 10 12 15V17H4Z" fill="#a9b1ba"/><circle cx="8" cy="7" r="2.9" fill="#f3c9ab"/><path d="M5 6.8Q4.8 3.4 8 3.4Q11.2 3.4 11 6.8Q9.6 5 8 5.3Q6.3 5 5 6.8Z" fill="#161616"/>
<path d="M9.5 15.5Q9.5 10.8 13 10.8Q16.5 10.8 16.5 15.5V17H9.5Z" fill="#b3bac2"/><circle cx="13" cy="8" r="2.8" fill="#f3c9ab"/><path d="M10.1 7.8Q9.9 4.6 13 4.6Q16.1 4.6 15.9 7.8Q14.6 6.1 13 6.4Q11.4 6.1 10.1 7.8Z" fill="#161616"/>
</svg>
<!-- sidebar: person + plus -->
<svg style="left:18.5px;top:84.5px" width="17" height="19" viewBox="0 0 17 19" filter="url(#bl)">
<rect x="9.5" y="8" width="6" height="9.5" fill="#e9e9e9" stroke="#b5b5b5" stroke-width=".6"/>
<path d="M.8 17Q.5 9.5 5.5 9.5Q10.5 9.5 10.3 17Z" fill="#4a4a4f"/><path d="M4.4 9.8L5.5 16L6.8 9.8Z" fill="#fff"/><path d="M5.1 10.2L5.5 15L6 10.2Z" fill="#b02222"/>
<circle cx="5.6" cy="5.6" r="3.2" fill="#efc0a0"/><path d="M2.3 5.4Q2 1.6 5.6 1.6Q9.2 1.6 8.9 5.4Q7.4 3.4 5.6 3.7Q3.8 3.4 2.3 5.4Z" fill="#1a1a1a"/>
<circle cx="12" cy="4" r="3.5" fill="#2fb545" stroke="#1d8a30" stroke-width=".5"/><path d="M12 1.8V6.2M9.8 4H14.2" stroke="#fff" stroke-width="1.4"/>
</svg>
<!-- sidebar: settings -->
<svg style="left:17px;top:455px" width="20" height="15" viewBox="0 0 20 15" filter="url(#bl)">
<path d="M4 9.2L5.6 6.6L7.6 7.2L9 5.2L11.4 5.8L13 4.2L15.4 5.2L16 7.2L18.6 7.6L19.2 10L17.6 11.4L18 13.4L15 14.4H6.2L3.6 12.6Z" fill="#e9c933" stroke="#a98a1c" stroke-width=".6"/>
<path d="M6.8 14.4V12.2Q7.7 11 8.6 12.2V14.4ZM10.4 14.4V12.2Q11.3 11 12.2 12.2V14.4ZM14 14.4V12.2Q14.8 11.2 15.6 12.2V14.4Z" fill="#7c5d0c"/>
<path d="M8 7.6L12 6.6L15.5 7.8" stroke="#f8eb9a" stroke-width="1" fill="none"/>
<path d="M.5 8.9L12 3.2L13.4 1L17 .3L15.8 2.2L18 3L15 5L12.8 4.8L1.6 10.6Z" fill="#cfd3d8" stroke="#6c7279" stroke-width=".6"/>
</svg>
<!-- sidebar: about -->
<svg style="left:17.6px;top:500.6px" width="18.8" height="18.8" viewBox="0 0 18.8 18.8"><ellipse cx="9.4" cy="9.4" rx="9" ry="9" fill="#fff" stroke="#27459a" stroke-width=".8"/><path d="M3 12.8L8.9 2.8H14.4V12.8H12.2V5.2H10.4L5.9 12.8Z" fill="#1c3f9e"/><path d="M4.6 12.8L10 3.7" stroke="#fff" stroke-width=".5"/><circle cx="12.5" cy="9.6" r="2.8" fill="#2fbf52"/><rect x="3" y="13.3" width="12.6" height="1.7" fill="#1c3f9e"/></svg>
<!-- sidebar: lock -->
<svg style="left:19.5px;top:545.5px" width="14" height="18.5" viewBox="0 0 14 18.5" filter="url(#bl)">
<path d="M3.4 8.5V5.2Q3.4 1.2 7 1.2Q10.6 1.2 10.6 5.2V8.5" fill="none" stroke="#c9ccd0" stroke-width="1.9"/>
<rect x=".8" y="7.8" width="12.4" height="10" rx="1.6" fill="#dba71e" stroke="#a87508" stroke-width=".7"/>
<rect x="1.8" y="8.6" width="10.4" height="3" rx="1" fill="#f3d463"/>
<path d="M2.5 14.5h9M2.5 16h9" stroke="#9c6b06" stroke-width=".8"/>
</svg>
<!-- sidebar: door -->
<svg style="left:20.5px;top:599.5px" width="15" height="20" viewBox="0 0 15 20" filter="url(#bl)">
<path d="M1 2L3 .6H12V17.5L10 19.4H1Z" fill="#8a6528"/><path d="M3 .6H12V17.5H3Z" fill="#b08a44"/><path d="M1 2L3 .6V17.5L1 19.4Z" fill="#6f4f1c"/>
<path d="M5 2.5V16M7.5 2.5V16M10 2.5V16" stroke="#94702f" stroke-width=".7"/>
<path d="M9.3 13.2L13.8 18M13.8 13.2L9.3 18" stroke="#e3344a" stroke-width="1.7"/>
</svg>
<!-- bottom buttons icons -->
<svg style="left:284.5px;top:616.5px" width="22" height="19" viewBox="0 0 22 19" filter="url(#bl)">
<path d="M1 1.5L9.5 .3L11.5 15.5L3 17.3Z" fill="#ededed" stroke="#c4c4c4" stroke-width=".6"/>
<path d="M2.6 3.3L8.5 2.5M3 6L9 5.2M3.4 8.7L9.3 7.9M3.8 11.4L9.6 10.6" stroke="#dc9a9a" stroke-width=".9"/>
<path d="M12.5 11.5A4 4 0 0 1 19 8.8L20 7.4L20.6 11.6L16.4 11.3L17.7 10A2.3 2.3 0 0 0 14.3 11.8Z" fill="#27a83b"/>
<path d="M20 13.2A4 4 0 0 1 13.5 15.9L12.5 17.3L11.9 13.1L16.1 13.4L14.8 14.7A2.3 2.3 0 0 0 18.2 12.9Z" fill="#1f9632"/>
</svg>
<svg style="left:360.5px;top:617px" width="21" height="18.5" viewBox="0 0 21 18.5" filter="url(#bl)">
<path d="M9 16V11.5Q9 8.5 12.5 8.5Q16 8.5 16 11.5V16Z" fill="#d5d5d5"/><circle cx="12.4" cy="4.8" r="2.8" fill="#f0c6a8"/><path d="M9.5 4.6Q9.3 1.3 12.4 1.3Q15.5 1.3 15.3 4.6Q14 2.9 12.4 3.2Q10.8 2.9 9.5 4.6Z" fill="#1b1b1b"/>
<path d="M.6 16.5V12Q.6 8.6 5.5 8.6Q10.4 8.6 10.4 12V16.5Z" fill="#279bd6"/><circle cx="5.6" cy="5" r="3.2" fill="#f3caab"/><path d="M2.3 4.8Q2 1 5.6 1Q9.2 1 8.9 4.8Q7.4 2.9 5.6 3.2Q3.8 2.9 2.3 4.8Z" fill="#151515"/>
<rect x="11.5" y="8" width="6.5" height="8" fill="#f4f4f4" stroke="#b9b9b9" stroke-width=".6"/>
<path d="M13.8 14.3L16 17L20 12.5" stroke="#26a43a" stroke-width="1.8" fill="none"/>
</svg>
<svg style="left:797px;top:617.5px" width="18" height="17" viewBox="0 0 18 17" filter="url(#bl)">
<path d="M8 14V10.5Q8 7.6 12 7.6Q16.5 7.6 16.8 12V14Z" fill="#2e9b44"/><circle cx="11.6" cy="4.4" r="2.8" fill="#efc4a6"/><path d="M8.7 4.2Q8.5 .9 11.6 .9Q14.7 .9 14.5 4.2Q13.2 2.5 11.6 2.8Q10 2.5 8.7 4.2Z" fill="#1b1b1b"/>
<path d="M.6 16.3V12Q.6 8.6 5.7 8.6Q10.8 8.6 10.8 12V16.3Z" fill="#279bd6"/><circle cx="5.7" cy="5.2" r="3.2" fill="#f3caab"/><path d="M2.4 5Q2.1 1.2 5.7 1.2Q9.3 1.2 9 5Q7.5 3.1 5.7 3.4Q3.9 3.1 2.4 5Z" fill="#151515"/>
</svg>
<!-- fotograf cek handled in main -->
<!-- dialog header icon -->
<svg style="left:657px;top:182px" width="17" height="19" viewBox="0 0 17 19" filter="url(#bl)">
<rect x="9.5" y="8" width="6" height="9.5" fill="#e9e9e9" stroke="#b5b5b5" stroke-width=".6"/>
<path d="M.8 17Q.5 9.5 5.5 9.5Q10.5 9.5 10.3 17Z" fill="#4a4a4f"/><path d="M4.4 9.8L5.5 16L6.8 9.8Z" fill="#fff"/><path d="M5.1 10.2L5.5 15L6 10.2Z" fill="#b02222"/>
<circle cx="5.6" cy="5.6" r="3.2" fill="#efc0a0"/><path d="M2.3 5.4Q2 1.6 5.6 1.6Q9.2 1.6 8.9 5.4Q7.4 3.4 5.6 3.7Q3.8 3.4 2.3 5.4Z" fill="#1a1a1a"/>
<circle cx="12" cy="4" r="3.5" fill="#2fb545" stroke="#1d8a30" stroke-width=".5"/><path d="M12 1.8V6.2M9.8 4H14.2" stroke="#fff" stroke-width="1.4"/>
</svg>
<!-- Bul -->
<svg style="left:1074px;top:174.5px" width="18" height="19" viewBox="0 0 18 19" filter="url(#bl)">
<ellipse cx="12" cy="17.3" rx="4.5" ry=".9" fill="#d0d0d0"/>
<path d="M10.2 10.8L15.3 16.8" stroke="#7a5a12" stroke-width="2.4" stroke-linecap="round"/><path d="M10.4 10.6L15 16.2" stroke="#e8c440" stroke-width="1.1" stroke-linecap="round"/>
<circle cx="7.6" cy="7.2" r="5.1" fill="#8fd3ea" stroke="#6f8ea0" stroke-width="1.2"/><ellipse cx="6.3" cy="5.3" rx="2.6" ry="1.7" fill="#dff4fb" opacity=".85"/>
</svg>
<!-- Kapat door -->
<svg style="left:1114.5px;top:175.3px" width="16" height="19" viewBox="0 0 15 20" filter="url(#bl)">
<path d="M1 2L3 .6H12V17.5L10 19.4H1Z" fill="#8a6528"/><path d="M3 .6H12V17.5H3Z" fill="#b08a44"/><path d="M1 2L3 .6V17.5L1 19.4Z" fill="#6f4f1c"/>
<path d="M5 2.5V16M7.5 2.5V16M10 2.5V16" stroke="#94702f" stroke-width=".7"/>
<path d="M8.6 12.6L14 17.8M14 12.6L8.6 17.8" stroke="#e3344a" stroke-width="1.7"/>
</svg>
<!-- webcam panel icons -->
<svg style="left:1052.5px;top:318.3px" width="11.5" height="9.5" viewBox="0 0 11.5 9.5">
<path d="M.6 3.6L3.8 .6L5.8 2.4L2.6 5.6Z" fill="#17a0a0" stroke="#174d55" stroke-width=".7"/>
<path d="M8.3 .6V3.2H6.8L8.8 5.6L10.8 3.2H9.3V.6Z" fill="#111"/>
<rect x="7.2" y="6.3" width="3.2" height="2.8" fill="#d81515" stroke="#7a0b0b" stroke-width=".5"/>
</svg>
<svg style="left:1083.8px;top:318.8px" width="9.8" height="8.6" viewBox="0 0 9.8 8.6"><rect x=".5" y=".5" width="8.8" height="7.6" rx="1.2" fill="#5fd4d4" stroke="#666d72" stroke-width="1.3"/><rect x="3.2" y="2.6" width="3.4" height="2.6" fill="#c9f4f4"/></svg>
<svg style="left:1115px;top:318.8px" width="8.6" height="8.6" viewBox="0 0 8.6 8.6"><path d="M.7 .7L7.9 7.9M7.9 .7L.7 7.9" stroke="#8b1212" stroke-width="1.1"/></svg>
<!-- big button check -->
<svg style="left:783.5px;top:352px" width="18" height="15" viewBox="0 0 18 15" filter="url(#bl)"><path d="M1 7.5L3.6 5.4L7 9L15.5 1.2L17.4 2.6L7.2 13.8Z" fill="#3cc43c" stroke="#1f8f25" stroke-width=".7"/><path d="M3.5 6.8L7 10.5L15.5 2.3" stroke="#b4f09a" stroke-width=".9" fill="none" opacity=".8"/></svg>
<!-- dialog toolbar balls -->
<svg style="left:659.7px;top:524.2px" width="16" height="16" viewBox="0 0 16 16" filter="url(#bl)"><circle cx="8" cy="8" r="7.2" fill="url(#gball)"/><ellipse cx="8" cy="4.6" rx="4.8" ry="2.8" fill="#fff" opacity=".35"/><path d="M3.2 8L8 3.8V6.3H12.6V9.7H8V12.2Z" fill="#fff"/></svg>
<svg style="left:711.8px;top:524.2px" width="16" height="16" viewBox="0 0 16 16" filter="url(#bl)"><circle cx="8" cy="8" r="7.2" fill="url(#gball)"/><ellipse cx="8" cy="4.6" rx="4.8" ry="2.8" fill="#fff" opacity=".35"/><path d="M12.8 8L8 3.8V6.3H3.4V9.7H8V12.2Z" fill="#fff"/></svg>
<svg style="left:782.6px;top:523.8px" width="16" height="16" viewBox="0 0 16 16" filter="url(#bl)"><circle cx="8" cy="8" r="7.2" fill="url(#gball)"/><ellipse cx="8" cy="4.6" rx="4.8" ry="2.8" fill="#fff" opacity=".35"/><path d="M8 3.6V12.4M3.6 8H12.4" stroke="#fff" stroke-width="2.6"/></svg>
<svg style="left:846.4px;top:523.8px" width="16" height="16" viewBox="0 0 16 16" filter="url(#bl)"><circle cx="8" cy="8" r="7.2" fill="url(#xball)"/><ellipse cx="8" cy="4.6" rx="4.8" ry="2.8" fill="#fff" opacity=".35"/><path d="M3.8 8H12.2" stroke="#fff" stroke-width="2.6"/></svg>
<svg style="left:909.5px;top:523.8px" width="16" height="16" viewBox="0 0 16 16" filter="url(#bl)"><circle cx="8" cy="8" r="7.2" fill="url(#xball)"/><ellipse cx="8" cy="4.6" rx="4.8" ry="2.8" fill="#fff" opacity=".35"/><path d="M5.3 11.3L6 8.6L10 4.4L11.8 6.1L7.8 10.4Z" fill="#fff"/></svg>
<svg style="left:971.5px;top:523.5px" width="18" height="15" viewBox="0 0 18 15" filter="url(#bl)"><path d="M1 7.5L3.6 5.4L7 9L15.5 1.2L17.4 2.6L7.2 13.8Z" fill="#3cc43c" stroke="#1f8f25" stroke-width=".7"/><path d="M3.5 6.8L7 10.5L15.5 2.3" stroke="#b4f09a" stroke-width=".9" fill="none" opacity=".8"/></svg>
<svg style="left:1036.2px;top:523.8px" width="16" height="16" viewBox="0 0 16 16" filter="url(#bl)"><circle cx="8" cy="8" r="7.2" fill="url(#rball)"/><ellipse cx="8" cy="4.6" rx="4.8" ry="2.8" fill="#fff" opacity=".35"/><path d="M5 5L11 11M11 5L5 11" stroke="#fff" stroke-width="2.3"/></svg>
<svg style="left:1099.2px;top:523.8px" width="16" height="16" viewBox="0 0 16 16" filter="url(#bl)"><circle cx="8" cy="8" r="7.2" fill="url(#gball)"/><ellipse cx="8" cy="4.6" rx="4.8" ry="2.8" fill="#fff" opacity=".35"/><path d="M4.2 7.2A4 4 0 0 1 11 5.2L12 4V7.6H8.5L9.8 6.3A2.4 2.4 0 0 0 5.9 7.4ZM11.8 8.8A4 4 0 0 1 5 10.8L4 12V8.4H7.5L6.2 9.7A2.4 2.4 0 0 0 10.1 8.6Z" fill="#fff"/></svg>
</body>
</html>
